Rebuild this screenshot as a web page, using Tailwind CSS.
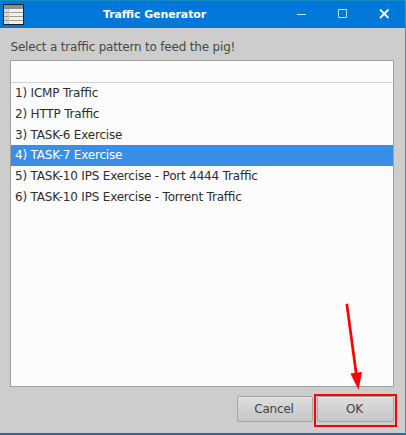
<!DOCTYPE html>
<html lang="en">
<head>
<meta charset="utf-8">
<title>Traffic Generator</title>
<script src="https://cdn.jsdelivr.net/npm/@tailwindcss/browser@4"></script>
</head>
<body class="relative flex h-[435px] w-[406px] flex-col overflow-hidden border-r border-b-2 border-r-[#2c9dc9] border-b-[#236d9b] bg-[#cdcdcd] font-['DejaVu_Sans',sans-serif] text-[12px] tracking-[-0.19px] text-[#2e2e2e] [font-feature-settings:'liga'_1]">
  <header class="grid h-7 shrink-0 grid-cols-[32px_1fr_32px_120px] border-t border-[#168abd] bg-[#0078d9]">
    <svg class="mt-[3px] ml-[3px] h-[21px] w-[21px]" viewBox="0 0 21 21" shape-rendering="crispEdges">
      <rect width="21" height="21" fill="#222"/>
      <rect x="1" y="1" width="19" height="19" fill="#f0f0ec"/>
      <rect x="1" y="1" width="19" height="4" fill="#8c8c8a"/>
      <rect x="1" y="5" width="4" height="15" fill="#d8d8d4"/>
      <path d="M1 8.500h19M1 12.500h19M1 16.500h19" stroke="#9c9c98"/>
      <path d="M5.500 5v15" stroke="#c4c4c0"/>
    </svg>
    <h1 class="col-start-2 -mr-8 flex items-center pt-px pl-[71px] text-[11px] font-bold tracking-[-0.1px] whitespace-nowrap text-white">Traffic Generator</h1>
    <svg class="col-start-4 h-[27px] w-[120px]" viewBox="0 0 120 27" fill="none">
      <path d="M12 13.500h9" stroke="#c5e2f7"/>
      <path d="M53.500 8.500h8v8h-8z" stroke="#b9dcf6"/>
      <path d="M95 8.500l8.500 8.500M103.500 8.500l-8.500 8.500" stroke="#fff" stroke-width="1.800"/>
    </svg>
  </header>
  <main class="flex flex-1 flex-col px-[10px]">
    <p class="mt-[10px] h-[22px] pl-[0.500px] leading-[18px] whitespace-nowrap text-[#484848]">Select a traffic pattern to feed the pig!</p>
    <div class="h-[327px] w-[384px] border border-[#a0a0a0] bg-[#fcfcfc]">
      <div class="h-[22px] border-b border-[#d2d2d2]"></div>
      <ul class="leading-[21.500px] whitespace-nowrap">
        <li class="h-[20.800px] pl-1">1) ICMP Traffic</li>
        <li class="h-[20.800px] pl-1">2) HTTP Traffic</li>
        <li class="h-[20.800px] pl-1">3) TASK-6 Exercise</li>
        <li class="h-[20.800px] bg-[#398ee7] pl-1 text-white">4) TASK-7 Exercise</li>
        <li class="h-[20.800px] pl-1">5) TASK-10 IPS Exercise - Port 4444 Traffic</li>
        <li class="h-[20.800px] pl-1">6) TASK-10 IPS Exercise - Torrent Traffic</li>
      </ul>
    </div>
    <div class="mt-[9px] flex justify-end gap-1 pr-px">
      <button class="h-[26px] w-[76px] rounded-[2px] border border-[#a5a5a5] bg-linear-to-b from-[#dedede] to-[#c6c6c6] pr-[2px] pb-px text-[#444] shadow-[inset_0_1px_0_#e6e6e6]">Cancel</button>
      <button class="h-[26px] w-[77px] rounded-[2px] border border-[#a5a5a5] bg-linear-to-b from-[#dedede] to-[#c6c6c6] pr-[2px] pb-px text-[#444] shadow-[inset_0_1px_0_#e6e6e6]">OK</button>
    </div>
  </main>
  <svg class="pointer-events-none absolute top-0 left-0" width="406" height="435" fill="none">
    <path d="M346.800 303.800L356.500 376" stroke="#fe0000" stroke-width="2.700"/>
    <path d="M350.500 373.500L362 372L358.500 390Z" fill="#fe0000"/>
    <rect x="315" y="395" width="81" height="31" stroke="#fe0000" stroke-width="2"/>
  </svg>
</body>
</html>
